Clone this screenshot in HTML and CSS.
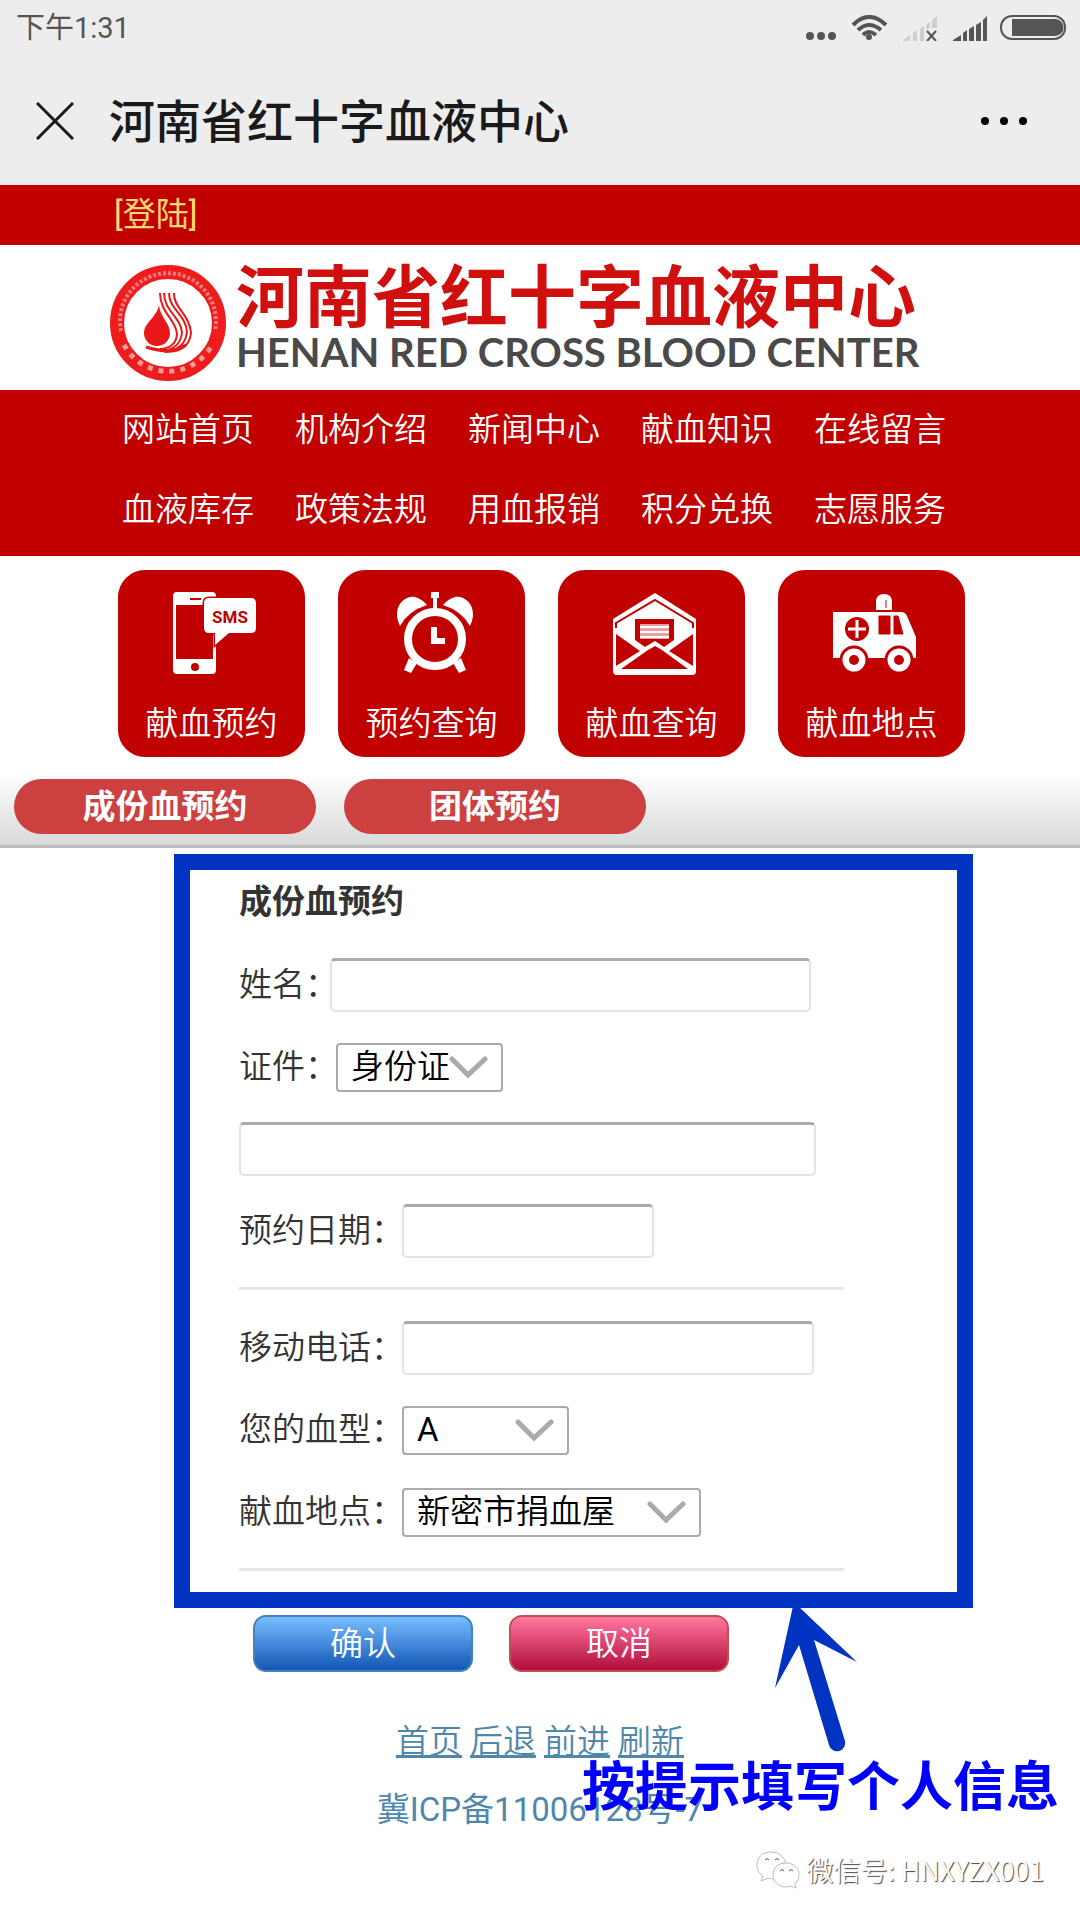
FILE: index.html
```
<!DOCTYPE html>
<html lang="zh-CN">
<head>
    <meta charset="UTF-8">
    <meta name="viewport" content="width=device-width, initial-scale=1.0">
    <title>河南省红十字血液中心</title>
    <link rel="stylesheet" href="styles.css">
</head>
<body>
    <div class="status-bar">
        <span>下午1:31</span>
        <svg width="262" height="26" viewBox="0 0 262 26" fill="#555">
            <circle cx="4" cy="21" r="4"/>
            <circle cx="15" cy="21" r="4"/>
            <circle cx="26" cy="21" r="4"/>
            <g fill="none" stroke="#555" stroke-width="4">
                <path d="M47 10Q63 -6 80 10"/>
                <path d="M52 15Q63 5 75 15"/>
                <path d="M57 20Q63 14 70 20"/>
            </g>
            <circle cx="63" cy="22" r="3"/>
            <path fill="#cfcfcf" d="M97 26v-1l7-5v6zM107 18l4-3v11h-4zM114 14l4-3v15h-4zM120 10l4-3v5l-4 3zM126 5l5-4v12h-5z"/>
            <path d="M121 16l9 10M130 16l-9 10" stroke="#555" stroke-width="2"/>
            <path d="M147 26v-1l8-5v6zM157 18l4-3v11h-4zM163 14l5-3v15h-5zM170 10l5-3v19h-5zM177 5l4-4v25h-4z"/>
            <rect x="195" y="1" width="64" height="23" rx="11" fill="none" stroke="#555" stroke-width="2"/>
            <path d="M206 4h43a8 8 0 0 1 0 17h-43z"/>
        </svg>
    </div>
    <header class="title-bar">
        <button class="icon-btn" type="button" aria-label="关闭">
            <svg width="38" height="38" viewBox="0 0 38 38"><path d="M1 1l36 36M37 1L1 37" stroke="#1a1a1a" stroke-width="3"/></svg>
        </button>
        <h1>河南省红十字血液中心</h1>
        <button class="icon-btn" type="button" aria-label="更多">
            <svg width="48" height="10" viewBox="0 0 48 10"><circle cx="5" cy="5" r="4"/><circle cx="24" cy="5" r="4"/><circle cx="43" cy="5" r="4"/></svg>
        </button>
    </header>

    <div class="login-bar"><a href="#">[登陆]</a></div>

    <div class="logo">
        <svg width="116" height="116" viewBox="0 0 116 116">
            <circle cx="58" cy="58" r="51" fill="none" stroke="#ee1c1c" stroke-width="14"/>
            <path d="M11 66A48 48 0 1 1 105 66" fill="none" stroke="#f47c7c" stroke-width="4" stroke-dasharray="3 2"/>
            <path d="M14 80A50 50 0 0 0 102 80" fill="none" stroke="#f69a9a" stroke-width="5" stroke-dasharray="5 6"/>
            <path d="M49 40C47 52 34 58 34 68a13 13 0 0 0 26 0C60 58 50 52 49 40z" fill="#e81818"/>
            <g fill="none" stroke="#e81818" stroke-width="2">
                <path d="M50 28C50 48 66 54 67 69Q66 83 50 84"/>
                <path d="M54 28C54 46 71 52 72 68Q70 84 52 86"/>
                <path d="M59 28C59 44 76 50 77 67Q75 85 54 87"/>
                <path d="M64 28C63 42 80 50 81 68Q79 87 56 87"/>
                <path d="M36 82Q60 90 76 80" stroke-width="3"/>
            </g>
        </svg>
        <div class="logo-text">
            <div class="logo-cn">河南省红十字血液中心</div>
            <div class="logo-en">HENAN RED CROSS BLOOD CENTER</div>
        </div>
    </div>

    <nav class="main-nav">
        <a href="#">网站首页</a>
        <a href="#">机构介绍</a>
        <a href="#">新闻中心</a>
        <a href="#">献血知识</a>
        <a href="#">在线留言</a>
        <a href="#">血液库存</a>
        <a href="#">政策法规</a>
        <a href="#">用血报销</a>
        <a href="#">积分兑换</a>
        <a href="#">志愿服务</a>
    </nav>

    <div class="cards">
        <a class="card" href="#">
            <svg width="83" height="83" viewBox="0 0 83 83">
                <path fill="#fff" fill-rule="evenodd" d="M4 0H39Q43 0 43 4V78Q43 82 39 82H4Q0 82 0 78V4Q0 0 4 0zM3 13V67H40V13z"/>
                <path d="M17 7h11" stroke="#c10000" stroke-width="2"/>
                <circle cx="22" cy="75" r="4" fill="#c10000"/>
                <path d="M36 6H78Q83 6 83 11V36Q83 41 78 41H56L42 53V41H36Q31 41 31 36V11Q31 6 36 6z" fill="#fff" stroke="#c10000" stroke-width="3" paint-order="stroke"/>
                <text x="57" y="31" text-anchor="middle" class="sms">SMS</text>
            </svg>
            <span>献血预约</span>
        </a>
        <a class="card" href="#">
            <svg width="83" height="83" viewBox="0 0 83 83">
                <g fill="#fff">
                    <path d="M7 34C-2 16 11 3 22 5Q29 7 34 13Q15 19 7 34z"/>
                    <path d="M77 34C86 16 73 3 62 5Q55 7 50 13Q69 19 77 34z"/>
                    <path d="M38 0h8v6h-2v12h-4V6h-2z"/>
                    <path d="M16 66l8 5-6 10-7-3zM68 66l-8 5 6 10 7-3z"/>
                </g>
                <circle cx="42" cy="47" r="27" fill="#c10000" stroke="#fff" stroke-width="8"/>
                <path d="M41 35V49H52" fill="none" stroke="#fff" stroke-width="6"/>
            </svg>
            <span>预约查询</span>
        </a>
        <a class="card" href="#">
            <svg width="83" height="83" viewBox="0 0 83 83">
                <path d="M0 27L42 1L83 27V79Q83 83 79 83H4Q0 83 0 79z" fill="#fff"/>
                <path d="M3 36V31L42 8L80 31V36" fill="none" stroke="#c10000" stroke-width="2"/>
                <path d="M3 42L27 59L3 74zM80 42L56 59L80 74zM8 77L35 58L42 54L49 58L75 77z" fill="#c10000"/>
                <path d="M22 27H61V48L51 55L42 49L32 55L22 48z" fill="#c10000"/>
                <path d="M27 32H56V47H27z" fill="#e8a0a0"/>
                <path d="M27 35h29M27 40h29M27 45h29" stroke="#fff" stroke-width="2"/>
            </svg>
            <span>献血查询</span>
        </a>
        <a class="card" href="#">
            <svg width="83" height="83" viewBox="0 0 83 83">
                <path d="M0 20H68Q72 20 74 24L83 45V66H0z" fill="#fff"/>
                <path d="M43 18V10Q43 2 51 2Q59 2 59 10V18z" fill="#fff"/>
                <path d="M53 8v8M46 24H57V42H46zM61 24H65L70 42H61z" fill="#c10000" stroke="#c10000"/>
                <circle cx="24" cy="37" r="12" fill="#c10000"/>
                <path d="M24 28v18M15 37h18" stroke="#fff" stroke-width="3"/>
                <g fill="#fff" stroke="#c10000" stroke-width="3">
                    <circle cx="21" cy="68" r="13"/>
                    <circle cx="66" cy="68" r="13"/>
                </g>
                <circle cx="21" cy="68" r="5" fill="#c10000"/>
                <circle cx="66" cy="68" r="5" fill="#c10000"/>
            </svg>
            <span>献血地点</span>
        </a>
    </div>

    <div class="tabs">
        <a href="#">成份血预约</a>
        <a href="#">团体预约</a>
    </div>

    <form id="bookForm" class="booking" action="#" method="POST">
        <h2>成份血预约</h2>
        <div class="row">
            <label class="label-name" for="userName">姓名：</label>
            <input class="w-name" type="text" id="userName" name="userName">
        </div>
        <div class="row">
            <label class="label-card" for="cardType">证件：</label>
            <select class="w-short" id="cardType" name="cardType">
                <option>身份证</option>
            </select>
        </div>
        <div class="row">
            <input class="w-card" type="text" id="cardNo" name="cardNo" aria-label="证件号码">
        </div>
        <div class="row">
            <label for="bookDate">预约日期：</label>
            <input class="w-date" type="text" id="bookDate" name="bookDate">
        </div>
        <hr>
        <div class="row">
            <label for="mobile">移动电话：</label>
            <input class="w-mobile" type="tel" id="mobile" name="mobile">
        </div>
        <div class="row">
            <label for="bloodType">您的血型：</label>
            <select class="w-short blood-type" id="bloodType" name="bloodType">
                <option>A</option>
                <option>B</option>
                <option>O</option>
                <option>AB</option>
            </select>
        </div>
        <div class="row">
            <label for="place">献血地点：</label>
            <select class="w-place" id="place" name="place">
                <option>新密市捐血屋</option>
            </select>
        </div>
        <hr>
    </form>

    <div class="bottom">
        <div class="buttons">
            <button class="btn-ok" type="submit" form="bookForm">确认</button>
            <button class="btn-cancel" type="reset" form="bookForm">取消</button>
        </div>
        <footer>
            <div class="foot-links">
                <a href="#">首页</a>
                <a href="#">后退</a>
                <a href="#">前进</a>
                <a href="#">刷新</a>
            </div>
            <div class="icp">冀ICP备11006128号-7</div>
        </footer>
        <svg class="arrow" width="90" height="150" viewBox="0 0 90 150">
            <path d="M23 0H28L87 56L44 34L75 135A8 8 0 0 1 59 139L29 39L5 82z" fill="#0033c2"/>
        </svg>
        <div class="hint">按提示填写个人信息</div>
        <div class="wechat">
            <svg width="44" height="40" viewBox="0 0 44 40" fill="#fff" stroke="#bbb">
                <path d="M15 2C6 2 1 8 1 15Q1 22 7 26L5 31L12 28Q17 30 20 28Q28 27 30 15Q28 2 15 2z"/>
                <path d="M30 13C21 13 17 19 17 25C17 32 23 37 30 37L35 36L40 38L39 34Q43 30 43 25C43 18 37 13 30 13z"/>
                <path d="M9 10q2-3 4 0M19 10q2-3 4 0M24 21q2-3 4 0M33 21q2-3 4 0" stroke="#555"/>
            </svg>
            <span>微信号: HNXYZX001</span>
        </div>
    </div>
</body>
</html>
```
FILE: styles.css
```
* {
    box-sizing: border-box;
}
body {
    margin: 0;
    background: #fff;
    color: #333;
    font-family: Roboto, "Noto Sans CJK SC", sans-serif;
    font-size: 33px;
    font-weight: 350;
    line-height: 40px;
}
a {
    text-decoration: none;
}
svg {
    display: block;
    flex: none;
}

/* phone header */
.status-bar {
    display: flex;
    justify-content: space-between;
    align-items: center;
    height: 56px;
    padding: 0 12px 0 16px;
    background: #ededed;
    color: #555;
    font-size: 29px;
    font-weight: 400;
}
.title-bar {
    display: flex;
    align-items: center;
    height: 129px;
    padding: 0 52px 0 36px;
    background: #ededed;
}
.title-bar h1 {
    flex: 1;
    margin: 2px 0 0 35px;
    color: #1a1a1a;
    font-size: 46px;
    font-weight: 500;
    line-height: 60px;
}
.icon-btn {
    padding: 0;
    border: none;
    background: none;
}

/* site header */
.login-bar {
    padding: 10px 114px;
    background: #c10000;
}
.login-bar a {
    color: #ffd773;
    font-weight: 400;
}
.logo {
    display: flex;
    align-items: center;
    gap: 10px;
    height: 145px;
    padding: 10px 110px 0;
}
.logo-text {
    padding-bottom: 5px;
    white-space: nowrap;
}
.logo-cn {
    color: #d00f0f;
    font-size: 68px;
    font-weight: bold;
    line-height: 64px;
}
.logo-en {
    color: #4a4a4a;
    font-family: Lato, sans-serif;
    font-size: 40px;
    font-weight: bold;
    line-height: 42px;
}
.main-nav {
    display: flex;
    flex-wrap: wrap;
    column-gap: 41px;
    padding: 0 122px 6px;
    background: #c10000;
}
.main-nav a {
    color: #fff;
    line-height: 80px;
}

/* shortcuts */
.cards {
    display: flex;
    gap: 33px;
    padding: 14px 115px 19px 118px;
}
.card {
    display: flex;
    flex: 1;
    flex-direction: column;
    align-items: center;
    gap: 29px;
    height: 187px;
    padding-top: 22px;
    border-radius: 27px;
    background: #c10000;
    color: #fff;
}
.card svg {
    margin-left: 6px;
}
.sms {
    fill: #c10000;
    font-family: Roboto, sans-serif;
    font-size: 17px;
    font-weight: bold;
}
.tabs {
    display: flex;
    gap: 28px;
    padding: 3px 14px 11px;
    border-bottom: 3px solid #bbbcbc;
    background: linear-gradient(#fdfdfd, #d8d9d9);
}
.tabs a {
    width: 302px;
    border-radius: 28px;
    background: #cd4040;
    color: #fff;
    font-weight: bold;
    line-height: 55px;
    text-align: center;
}

/* booking form */
.booking {
    display: flex;
    flex-direction: column;
    gap: 28px;
    margin: 6px 107px 0 174px;
    padding: 4px 113px 18px 49px;
    border: 16px solid #0033c2;
}
.booking h2 {
    margin: 0;
    font-size: 33px;
    line-height: 56px;
}
.row {
    display: flex;
    align-items: center;
    height: 54px;
}
.row label {
    flex: none;
    width: 163px;
    white-space: nowrap;
}
.row .label-name {
    width: 91px;
}
.row .label-card {
    width: 97px;
}
.row input {
    height: 54px;
    padding: 0 12px;
    border: 2px solid #e2e4ea;
    border-top: 3px solid #aaa;
    border-radius: 5px;
    background: #fff;
    font: inherit;
}
.row select {
    height: 49px;
    padding: 0 0 0 13px;
    border: 2px solid #aaa;
    border-radius: 4px;
    appearance: none;
    background: #fff url("data:image/svg+xml,%3Csvg xmlns='http://www.w3.org/2000/svg' width='39' height='23'%3E%3Cpath d='M3 3L19 19L36 3' fill='none' stroke='%23aaa' stroke-width='5' stroke-linecap='round'/%3E%3C/svg%3E") no-repeat right 13px center;
    color: #000;
    font: inherit;
}
.row .blood-type {
    font-weight: 400;
}
.w-name {
    width: 481px;
}
.w-card {
    width: 577px;
}
.w-date {
    width: 252px;
}
.w-mobile {
    width: 412px;
}
.w-short {
    width: 167px;
}
.w-place {
    width: 299px;
}
hr {
    width: 100%;
    height: 3px;
    margin: 1px 0 3px;
    border: none;
    background: #e6e6e6;
}

/* buttons and footer */
.bottom {
    position: relative;
    padding-top: 7px;
}
.buttons {
    display: flex;
    gap: 36px;
    padding-left: 253px;
}
.buttons button {
    width: 220px;
    height: 57px;
    padding: 0;
    border: 2px solid #4682b8;
    border-radius: 13px;
    background: linear-gradient(#78bdff, #1257b5);
    color: #fff;
    font: inherit;
}
.buttons .btn-cancel {
    border-color: #be5055;
    background: linear-gradient(#ff78a0, #b30d3c);
}
footer {
    padding-top: 50px;
    color: #4f87ac;
    text-align: center;
}
.foot-links a {
    color: #4f87ac;
    text-decoration: underline;
}
.icp {
    margin-top: 28px;
    font-weight: 400;
}
.arrow {
    position: absolute;
    top: -2px;
    right: 220px;
}
.hint {
    position: absolute;
    top: 150px;
    right: 21px;
    color: #0000fe;
    font-size: 53px;
    font-weight: bold;
    line-height: 60px;
}
.wechat {
    display: flex;
    justify-content: flex-end;
    align-items: center;
    gap: 6px;
    padding: 20px 36px 30px;
    color: #fff;
    font-family: "Noto Sans CJK SC", sans-serif;
    font-size: 27px;
    text-shadow: 1px 1px 1px #444;
}
```
